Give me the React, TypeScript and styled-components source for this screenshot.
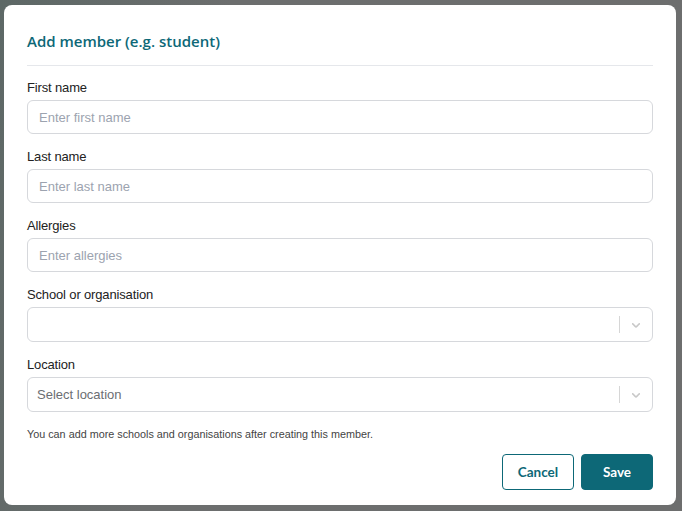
import React from 'react';
import styled, { createGlobalStyle } from 'styled-components';

const GlobalStyle = createGlobalStyle`
  html, body {
    margin: 0;
    padding: 0;
    height: 100%;
  }
  body {
    background: #6d6e6e;
    font-family: 'Liberation Sans', Arial, sans-serif;
  }
  * {
    box-sizing: border-box;
  }
`;

const Backdrop = styled.div`
  min-height: 511px;
  padding: 5px 6px 5px 4px;
  background: linear-gradient(100deg, #5d6866 0%, #6c6e6e 30%, #6d6e6e 100%);
`;

const Modal = styled.div`
  background: #fff;
  border-radius: 8px;
  padding: 26px 23px 15px;
  display: flex;
  flex-direction: column;
`;

const Title = styled.h2`
  margin: 0;
  font-family: 'Open Sans', Lato, sans-serif;
  font-size: 15px;
  font-weight: 600;
  line-height: 20px;
  color: #0d6877;
  padding-bottom: 14px;
  border-bottom: 1px solid #e5e7eb;
`;

const Form = styled.div`
  padding-top: 12px;
  display: flex;
  flex-direction: column;
  gap: 13px;
`;

const Field = styled.div`
  display: flex;
  flex-direction: column;
  gap: 2px;
`;

const Label = styled.label`
  font-size: 13px;
  line-height: 20px;
  color: #222;
  letter-spacing: -0.15px;
`;

const Input = styled.input`
  height: 34px;
  padding: 0 11px;
  border: 1px solid #d6d8dc;
  border-radius: 6px;
  font-family: 'Liberation Sans', Arial, sans-serif;
  font-size: 13px;
  color: #222;
  outline: none;

  &::placeholder {
    color: #9ca3af;
  }
`;

const Select = styled.div`
  height: 35px;
  border: 1px solid #d6d8dc;
  border-radius: 6px;
  display: flex;
  align-items: center;
`;

const SelectValue = styled.div<{ $placeholder?: boolean }>`
  flex: 1;
  padding: 0 9px;
  font-size: 13px;
  color: ${p => (p.$placeholder ? '#6b6e72' : '#222')};
`;

const Indicator = styled.div`
  width: 33px;
  height: 100%;
  display: flex;
  align-items: center;
  justify-content: center;
  position: relative;
  color: #c8c8c8;

  &::before {
    content: '';
    position: absolute;
    left: 0;
    top: 8px;
    bottom: 8px;
    width: 1px;
    background: #d6d6d6;
  }

  svg {
    width: 14px;
    height: 14px;
  }
`;

const Note = styled.p`
  margin: 15px 0 0;
  font-size: 10.8px;
  line-height: 14px;
  color: #444;
`;

const Actions = styled.div`
  margin-top: 13px;
  display: flex;
  justify-content: flex-end;
  gap: 7px;
`;

const Button = styled.button<{ $primary?: boolean }>`
  width: 72px;
  height: 36px;
  border-radius: 4px;
  border: 1px solid #0d6877;
  background: ${p => (p.$primary ? '#0d6877' : '#fff')};
  color: ${p => (p.$primary ? '#fff' : '#0d6877')};
  font-family: Lato, 'Open Sans', sans-serif;
  font-size: 13.5px;
  font-weight: 700;
  cursor: pointer;
`;

function Chevron() {
  return (
    <svg viewBox="0 0 20 20" fill="currentColor">
      <path d="M4.516 7.548c0.436-0.446 1.043-0.481 1.576 0l3.908 3.747 3.908-3.747c0.533-0.481 1.141-0.446 1.574 0 0.436 0.445 0.408 1.197 0 1.615-0.406 0.418-4.695 4.502-4.695 4.502-0.217 0.223-0.502 0.335-0.787 0.335s-0.57-0.112-0.789-0.335c0 0-4.287-4.084-4.695-4.502s-0.436-1.170 0-1.615z" />
    </svg>
  );
}

type TextFieldProps = { label: string; placeholder: string };

function TextField({ label, placeholder }: TextFieldProps) {
  return (
    <Field>
      <Label>{label}</Label>
      <Input placeholder={placeholder} />
    </Field>
  );
}

type SelectFieldProps = { label: string; placeholder?: string };

function SelectField({ label, placeholder }: SelectFieldProps) {
  return (
    <Field>
      <Label>{label}</Label>
      <Select>
        <SelectValue $placeholder>{placeholder}</SelectValue>
        <Indicator>
          <Chevron />
        </Indicator>
      </Select>
    </Field>
  );
}

export default function App() {
  return (
    <>
      <GlobalStyle />
      <Backdrop>
        <Modal>
          <Title>Add member (e.g. student)</Title>
          <Form>
            <TextField label="First name" placeholder="Enter first name" />
            <TextField label="Last name" placeholder="Enter last name" />
            <TextField label="Allergies" placeholder="Enter allergies" />
            <SelectField label="School or organisation" />
            <SelectField label="Location" placeholder="Select location" />
          </Form>
          <Note>You can add more schools and organisations after creating this member.</Note>
          <Actions>
            <Button>Cancel</Button>
            <Button $primary>Save</Button>
          </Actions>
        </Modal>
      </Backdrop>
    </>
  );
}
